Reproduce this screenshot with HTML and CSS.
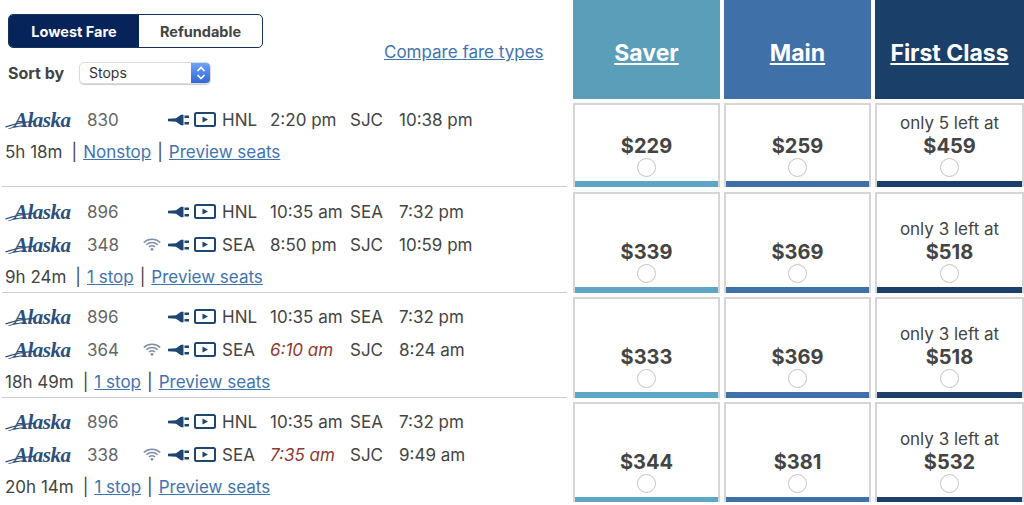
FILE: index.html
```html
<!DOCTYPE html>
<html lang="en">
<head>
<meta charset="utf-8">
<title>Flights</title>
<link rel="stylesheet" href="styles.css">
</head>
<body>
<svg class="defs" width="0" height="0" aria-hidden="true">
  <symbol id="swoosh" viewBox="0 0 30 14"><path d="M0 11.5C8 8.5 18 6.5 30 5.5L29 7C19 7.5 9 9.5 1 12.5Z" fill="#2b4f7e"/><path d="M3 13.5C9 11.5 14 10.5 20 10L19.4 11C14 11.5 9 12.5 4 14Z" fill="#2b4f7e"/></symbol>
  <symbol id="plug" viewBox="0 0 21 12"><path d="M0 4.7L8 4.3L13 .8H15.5V11.2H13L8 7.7L0 7.3Z" fill="#1f4673"/><path d="M16.5 1.6H21V4H16.5ZM16.5 8H21V10.4H16.5Z" fill="#1f4673"/></symbol>
  <symbol id="screen" viewBox="0 0 22 15"><rect x="1" y="1" width="20" height="13" rx="1.5" fill="none" stroke="#1f4673" stroke-width="2"/><path d="M8.5 4.5L14 7.5L8.5 10.5Z" fill="#1f4673"/></symbol>
  <symbol id="wifi" viewBox="0 0 18 13"><g fill="none" stroke="#7d8ea6" stroke-width="1.5"><path d="M.8 4.4C5.5 .2 12.5 .2 17.2 4.4"/><path d="M3.4 6.7C6.6 3.9 11.4 3.9 14.6 6.7"/><path d="M6 9C7.8 7.5 10.2 7.5 12 9"/></g><circle cx="9" cy="11.3" r="1.4" fill="#7d8ea6"/></symbol>
</svg>
<main class="page">
  <header class="grid head">
    <div class="controls">
      <div class="filters">
        <div class="toggle"><span class="tab on">Lowest Fare</span><span class="tab">Refundable</span></div>
        <div class="sort"><span class="sort-label">Sort by</span>
          <div class="select"><span class="select-text">Stops</span><span class="select-arrow"><svg width="12" height="16" viewBox="0 0 12 16"><path d="M2.5 6L6 2.5L9.5 6M2.5 10L6 13.5L9.5 10" fill="none" stroke="#fff" stroke-width="1.6"/></svg></span></div>
        </div>
      </div>
      <a class="link compare" href="#">Compare fare types</a>
    </div>
    <a class="fare-head saver" href="#">Saver</a>
    <a class="fare-head mainc" href="#">Main</a>
    <a class="fare-head first" href="#">First Class</a>
  </header>

  <section class="list">
    <div class="grid row short">
      <div class="info">
        <div class="line"><span class="logo"><svg class="sw"><use href="#swoosh"/></svg><span class="brand">Alaska</span></span><span class="num">830</span><span></span><svg class="ic-plug"><use href="#plug"/></svg><svg class="ic-screen"><use href="#screen"/></svg><span>HNL</span><span>2:20 pm</span><span>SJC</span><span>10:38 pm</span></div>
        <div class="sum"><span>5h 18m</span><span class="pipe first-pipe">|</span><a class="link" href="#">Nonstop</a><span class="pipe">|</span><a class="link" href="#">Preview seats</a></div>
      </div>
      <div class="card c-saver"><b>$229</b><i class="radio"></i></div>
      <div class="card c-main"><b>$259</b><i class="radio"></i></div>
      <div class="card c-first"><span class="left">only 5 left at</span><b>$459</b><i class="radio"></i></div>
    </div>

    <div class="grid row">
      <div class="info">
        <div class="line"><span class="logo"><svg class="sw"><use href="#swoosh"/></svg><span class="brand">Alaska</span></span><span class="num">896</span><span></span><svg class="ic-plug"><use href="#plug"/></svg><svg class="ic-screen"><use href="#screen"/></svg><span>HNL</span><span>10:35 am</span><span>SEA</span><span>7:32 pm</span></div>
        <div class="line"><span class="logo"><svg class="sw"><use href="#swoosh"/></svg><span class="brand">Alaska</span></span><span class="num">348</span><svg class="ic-wifi"><use href="#wifi"/></svg><svg class="ic-plug"><use href="#plug"/></svg><svg class="ic-screen"><use href="#screen"/></svg><span>SEA</span><span>8:50 pm</span><span>SJC</span><span>10:59 pm</span></div>
        <div class="sum"><span>9h 24m</span><span class="pipe first-pipe">|</span><a class="link" href="#">1 stop</a><span class="pipe">|</span><a class="link" href="#">Preview seats</a></div>
      </div>
      <div class="card c-saver"><b>$339</b><i class="radio"></i></div>
      <div class="card c-main"><b>$369</b><i class="radio"></i></div>
      <div class="card c-first"><span class="left">only 3 left at</span><b>$518</b><i class="radio"></i></div>
    </div>

    <div class="grid row">
      <div class="info">
        <div class="line"><span class="logo"><svg class="sw"><use href="#swoosh"/></svg><span class="brand">Alaska</span></span><span class="num">896</span><span></span><svg class="ic-plug"><use href="#plug"/></svg><svg class="ic-screen"><use href="#screen"/></svg><span>HNL</span><span>10:35 am</span><span>SEA</span><span>7:32 pm</span></div>
        <div class="line"><span class="logo"><svg class="sw"><use href="#swoosh"/></svg><span class="brand">Alaska</span></span><span class="num">364</span><svg class="ic-wifi"><use href="#wifi"/></svg><svg class="ic-plug"><use href="#plug"/></svg><svg class="ic-screen"><use href="#screen"/></svg><span>SEA</span><em class="late">6:10 am</em><span>SJC</span><span>8:24 am</span></div>
        <div class="sum"><span>18h 49m</span><span class="pipe first-pipe">|</span><a class="link" href="#">1 stop</a><span class="pipe">|</span><a class="link" href="#">Preview seats</a></div>
      </div>
      <div class="card c-saver"><b>$333</b><i class="radio"></i></div>
      <div class="card c-main"><b>$369</b><i class="radio"></i></div>
      <div class="card c-first"><span class="left">only 3 left at</span><b>$518</b><i class="radio"></i></div>
    </div>

    <div class="grid row">
      <div class="info">
        <div class="line"><span class="logo"><svg class="sw"><use href="#swoosh"/></svg><span class="brand">Alaska</span></span><span class="num">896</span><span></span><svg class="ic-plug"><use href="#plug"/></svg><svg class="ic-screen"><use href="#screen"/></svg><span>HNL</span><span>10:35 am</span><span>SEA</span><span>7:32 pm</span></div>
        <div class="line"><span class="logo"><svg class="sw"><use href="#swoosh"/></svg><span class="brand">Alaska</span></span><span class="num">338</span><svg class="ic-wifi"><use href="#wifi"/></svg><svg class="ic-plug"><use href="#plug"/></svg><svg class="ic-screen"><use href="#screen"/></svg><span>SEA</span><em class="late">7:35 am</em><span>SJC</span><span>9:49 am</span></div>
        <div class="sum"><span>20h 14m</span><span class="pipe first-pipe">|</span><a class="link" href="#">1 stop</a><span class="pipe">|</span><a class="link" href="#">Preview seats</a></div>
      </div>
      <div class="card c-saver"><b>$344</b><i class="radio"></i></div>
      <div class="card c-main"><b>$381</b><i class="radio"></i></div>
      <div class="card c-first"><span class="left">only 3 left at</span><b>$532</b><i class="radio"></i></div>
    </div>
  </section>
</main>
</body>
</html>
```
FILE: styles.css
```css
* { box-sizing: border-box; }
html, body { margin: 0; padding: 0; background: #fff; }
body { font-family: "Inter", "Liberation Sans", sans-serif; color: #444; font-size: 17px; overflow: hidden; }
.defs { display: block; height: 0; }
.page { width: 1024px; }
.grid { display: grid; grid-template-columns: 569px 147px 147px 149px; column-gap: 4px; }
.head { height: 99px; }
.controls { display: flex; align-items: flex-start; padding: 14px 0 0 8px; }
.filters { width: 376px; }
.toggle { display: flex; width: 255px; height: 34px; border: 1.5px solid #14335f; border-radius: 5px; overflow: hidden; font-size: 14.5px; font-weight: 700; }
.tab { flex: 1; display: flex; align-items: center; justify-content: center; color: #444; }
.tab.on { flex: 0 0 130px; background: #06245a; color: #fff; }
.sort { display: flex; align-items: center; margin-top: 14px; height: 22px; }
.sort-label { font-weight: 700; font-size: 16px; width: 71px; }
.select { display: flex; width: 132px; height: 22px; border: 1px solid #dcdcdc; border-radius: 5px; overflow: hidden; box-shadow: 0 1px 1px #ccc; }
.select-text { flex: 1; font-size: 14px; line-height: 20px; padding-left: 9px; color: #333; }
.select-arrow { flex: 0 0 19px; display: flex; align-items: center; justify-content: center; background: linear-gradient(#6ea2f5, #2f68d8); }
.link { color: #3f74b0; text-decoration: underline; }
.compare { font-size: 17px; margin-top: 28px; white-space: nowrap; }
.fare-head { display: flex; align-items: center; justify-content: center; color: #fff; font-size: 23px; font-weight: 700; text-decoration: underline; padding-top: 7px; }
.saver { background: #5a9eb9; }
.mainc { background: #3f71a8; }
.first { background: #1a3f68; }
.list { display: flex; flex-direction: column; row-gap: 5px; padding-top: 4px; }
.row { height: 100px; }
.row.short { height: 84px; }
.info { border-bottom: 1.5px solid #ccc; margin-left: 2px; margin-right: 2px; padding: 3px 0 0 3px; }
.short .info { padding-top: 0; }
.line { display: grid; grid-template-columns: 82px 56px 25px 26px 28px 48px 80px 49px 1fr; align-items: center; height: 33px; }
.logo { display: block; position: relative; height: 22px; }
.brand { position: absolute; left: 9px; top: -1px; font: italic 700 21px/24px "Liberation Serif", serif; color: #2b4f7e; letter-spacing: -.5px; }
.sw { position: absolute; left: 0; top: 6px; width: 30px; height: 14px; }
.num { color: #666; }
.ic-plug { width: 21px; height: 12px; }
.ic-screen { width: 22px; height: 15px; }
.ic-wifi { width: 18px; height: 13px; }
.late { color: #8e3a34; }
.sum { display: flex; align-items: center; height: 31px; }
.pipe { margin: 0 6px; }
.first-pipe { margin-left: 9px; }
.card { display: flex; flex-direction: column; align-items: center; justify-content: flex-end; border: 2px solid #d6d6d6; border-bottom-width: 0; }
.card b { font-size: 20px; line-height: 24px; }
.left { font-size: 17px; line-height: 22px; }
.radio { display: block; width: 19px; height: 19px; margin: 0 0 2px; border: 1.5px solid #c4c4c4; border-radius: 50%; }
.card::after { content: ""; display: block; align-self: stretch; height: 6px; margin-top: 2px; }
.c-saver::after { background: #5fa5c4; }
.c-main::after { background: #3f71a8; }
.c-first::after { background: #1b3f68; }
```
